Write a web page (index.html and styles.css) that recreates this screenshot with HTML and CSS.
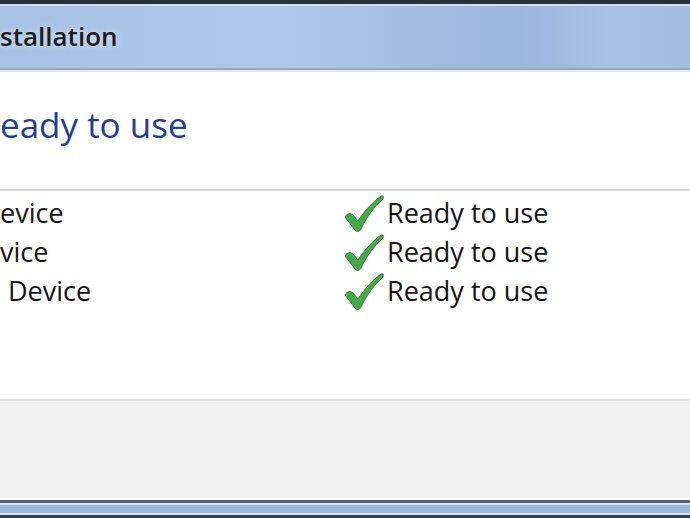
FILE: index.html
```html
<!DOCTYPE html>
<html lang="en">
<head>
    <meta charset="UTF-8">
    <meta name="viewport" content="width=device-width, initial-scale=1.0">
    <title>Driver Software Installation</title>
    <link rel="stylesheet" href="styles.css">
</head>
<body>
    <div class="window">
        <div class="frame-top"></div>
        <div class="titlebar">
            <span class="title">stallation</span>
        </div>

        <div class="content">
            <h1 class="main-instruction">eady to use</h1>
            <div class="device-list">
                <div class="device-row">
                    <span class="device-name">evice</span>
                    <span class="device-status">
                        <svg class="check" width="42" height="39" viewBox="0 0 42 39">
                            <path d="M2 23 C4 19 8 19 10 21 L15 27 C22 16 30 8 38 2 C40 1 41 3 40 5 C31 13 23 24 18 35 C17 38 13 38 12 36 Z" />
                        </svg>
                        Ready to use
                    </span>
                </div>
                <div class="device-row">
                    <span class="device-name">vice</span>
                    <span class="device-status">
                        <svg class="check" width="42" height="39" viewBox="0 0 42 39">
                            <path d="M2 23 C4 19 8 19 10 21 L15 27 C22 16 30 8 38 2 C40 1 41 3 40 5 C31 13 23 24 18 35 C17 38 13 38 12 36 Z" />
                        </svg>
                        Ready to use
                    </span>
                </div>
                <div class="device-row">
                    <span class="device-name shifted">Device</span>
                    <span class="device-status">
                        <svg class="check" width="42" height="39" viewBox="0 0 42 39">
                            <path d="M2 23 C4 19 8 19 10 21 L15 27 C22 16 30 8 38 2 C40 1 41 3 40 5 C31 13 23 24 18 35 C17 38 13 38 12 36 Z" />
                        </svg>
                        Ready to use
                    </span>
                </div>
            </div>
        </div>

        <div class="footer"></div>
        <div class="frame-bottom"></div>
    </div>
</body>
</html>
```

FILE: styles.css
```css
body {
    margin: 0;
    font-family: "Open Sans", "Noto Sans", sans-serif;
    background: #ffffff;
    overflow: hidden;
}
.window {
    width: 690px;
    height: 518px;
    display: flex;
    flex-direction: column;
}
.frame-top {
    height: 4px;
    background: #28323c;
    border-bottom: 2px solid #d2e1f0;
}
.titlebar {
    height: 62px;
    background: linear-gradient(90deg, #a6c2e4 0%, #adc8e8 40%, #9ab8dc 75%, #a5c1e3 88%, #a3bfe2 100%);
    border-bottom: 2px solid #9aa8b6;
    box-shadow: 0 2px 0 #e2e8ee;
    display: flex;
    align-items: center;
}
.title {
    font-size: 26px;
    font-weight: 600;
    color: #1a1c22;
    margin-bottom: 2px;
    text-shadow: 0 0 6px rgba(255, 255, 255, 0.7);
}
.content {
    flex: 1;
    padding-top: 35px;
}
.main-instruction {
    margin: 0;
    font-size: 35px;
    font-weight: normal;
    line-height: 40px;
    color: #1f3e98;
}
.device-list {
    margin-top: 44px;
    border-top: 2px solid #dadada;
    padding-top: 2px;
}
.device-row {
    display: flex;
    height: 39px;
    font-size: 27px;
    line-height: 39px;
    color: #141414;
}
.device-name {
    width: 343px;
}
.device-name.shifted {
    margin-left: 8px;
    width: 335px;
}
.device-status {
    display: flex;
    align-items: center;
    gap: 2px;
}
.check {
    margin-top: 1px;
}
.check path {
    fill: #46a948;
    stroke: #2f7d33;
    stroke-width: 1;
}
.footer {
    height: 97px;
    background: #f0f0f0;
    border-top: 2px solid #dfdfdf;
    border-bottom: 2px solid #ffffff;
}
.frame-bottom {
    height: 12px;
    background: #9cb9de;
    border-top: 3px solid #56626e;
    box-shadow: inset 0 2px 0 #d8e6f4, inset 0 -2px 0 #d0e1f3;
    border-bottom: 3px solid #34404a;
}
```
